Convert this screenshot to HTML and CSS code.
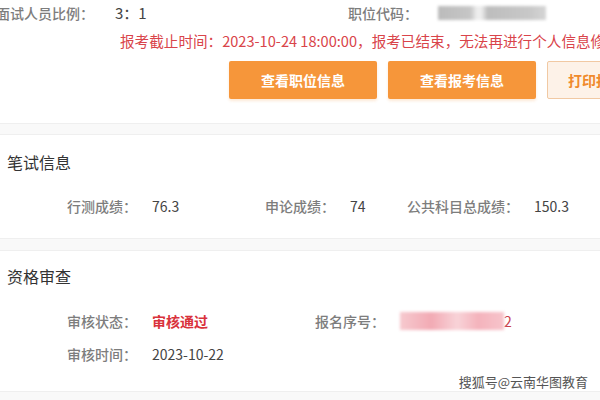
FILE: index.html
```html
<!DOCTYPE html>
<html lang="zh-CN">
  <head>
    <meta charset="UTF-8" />
    <meta name="viewport" content="width=device-width, initial-scale=1.0" />
    <title>报考信息</title>
    <link rel="stylesheet" href="styles.css">
  </head>
  <body>
    <div class="page">
      <div class="panel panel-top">
        <div class="info-row">
          <span class="label ratio-label">面试人员比例：</span>
          <span class="value">3：1</span>
          <span class="label code-label">职位代码：</span>
          <span class="masked masked-gray"></span>
        </div>
        <p class="notice">报考截止时间：2023-10-24 18:00:00，报考已结束，无法再进行个人信息修改</p>
        <div class="actions">
          <button class="btn">查看职位信息</button>
          <button class="btn">查看报考信息</button>
          <button class="btn btn-light">打印报名表</button>
        </div>
      </div>

      <div class="panel panel-exam">
        <h2>笔试信息</h2>
        <div class="fields scores">
          <div class="field"><span class="label">行测成绩：</span><span class="value">76.3</span></div>
          <div class="field"><span class="label">申论成绩：</span><span class="value">74</span></div>
          <div class="field"><span class="label">公共科目总成绩：</span><span class="value">150.3</span></div>
        </div>
      </div>

      <div class="panel panel-review">
        <h2>资格审查</h2>
        <div class="fields review">
          <div class="field"><span class="label">审核状态：</span><span class="value status">审核通过</span></div>
          <div class="field"><span class="label">报名序号：</span><span class="masked masked-pink"></span><span class="value serial">2</span></div>
        </div>
        <div class="fields review second">
          <div class="field"><span class="label">审核时间：</span><span class="value">2023-10-22</span></div>
        </div>
      </div>

      <!-- 水印 -->
      <div class="watermark">搜狐号@云南华图教育</div>
    </div>
  </body>
</html>
```

FILE: styles.css
```css
body {
  margin: 0;
  background-color: #fff;
  color: #333;
  font-family: "Noto Sans CJK SC", "Microsoft YaHei", sans-serif;
  font-size: 14px;
  overflow: hidden;
}

.page {
  position: relative;
  width: 600px;
  height: 400px;
  background-color: #f9f9f9;
}

.panel {
  background-color: #fff;
  border-top: 1px solid #efefef;
  border-bottom: 1px solid #efefef;
}

.label {
  color: #7d7d7d;
  font-weight: 500;
}

.value {
  color: #444;
}

/* 顶部信息 */
.panel-top {
  border-top: none;
  padding-top: 3px;
  height: 120px;
  margin-bottom: 10px;
}

.info-row {
  display: flex;
  align-items: center;
  height: 20px;
  line-height: 20px;
  margin-left: -4px;
}

.ratio-label {
  width: 119px;
  font-size: 14px;
}

.info-row .value {
  width: 233px;
  font-size: 15px;
}

.code-label {
  width: 90px;
}

.masked {
  display: inline-block;
  filter: blur(1.5px);
}

.masked-gray {
  width: 108px;
  height: 14px;
  background: linear-gradient(90deg, #bbb 0, #c6c6c6 30%, #eee 36%, #eee 40%, #bdbdbd 46%, #c8c8c8 85%, #d5d5d5 100%);
}

.notice {
  margin: 8px 0 0 120px;
  height: 20px;
  line-height: 20px;
  font-size: 14.6px;
  color: #d9444a;
  white-space: nowrap;
}

.actions {
  display: flex;
  gap: 11px;
  margin: 10px 0 0 229px;
  width: 420px;
}

.btn {
  flex: 0 0 148px;
  height: 38px;
  border: none;
  border-radius: 2px;
  background-color: #f6963a;
  color: #fff;
  font-family: inherit;
  font-size: 14px;
  font-weight: 700;
  box-shadow: 0 2px 3px rgba(246, 150, 58, 0.2);
}

.btn-light {
  flex-basis: 120px;
  background-color: #fdf2e8;
  border: 1px solid #f1c9a3;
  color: #f08a2c;
  text-align: left;
  padding-left: 20px;
  white-space: nowrap;
  box-shadow: none;
}

/* 信息区块 */
h2 {
  margin: 0 0 0 7px;
  font-size: 16px;
  font-weight: 400;
  line-height: 24px;
  color: #333;
}

.panel-exam {
  padding: 15px 0 22px;
  margin-bottom: 11px;
}

.panel-review {
  padding: 13px 0 27px;
}

.fields {
  display: grid;
  padding-left: 67px;
  line-height: 20px;
}

.field {
  display: flex;
  align-items: center;
  gap: 15px;
}

.scores {
  grid-template-columns: 198px 142px auto;
  margin-top: 22px;
}

.review {
  grid-template-columns: 248px auto;
  margin-top: 23px;
}

.review.second {
  margin-top: 13px;
}

.value.status {
  color: #d9323c;
  font-weight: 700;
}

.masked-pink {
  width: 104px;
  height: 18px;
  background: linear-gradient(90deg, #f6c9cf 0, #f2aab4 30%, #f8d3d8 55%, #f4b3bc 75%, #f7c4cb 100%);
}

.value.serial {
  margin-left: -15px;
  color: #c9404a;
}

.watermark {
  position: absolute;
  right: 12px;
  bottom: 9px;
  font-size: 13px;
  color: #555;
  text-shadow: 0 0 2px #fff, 0 0 2px #fff;
}
```
